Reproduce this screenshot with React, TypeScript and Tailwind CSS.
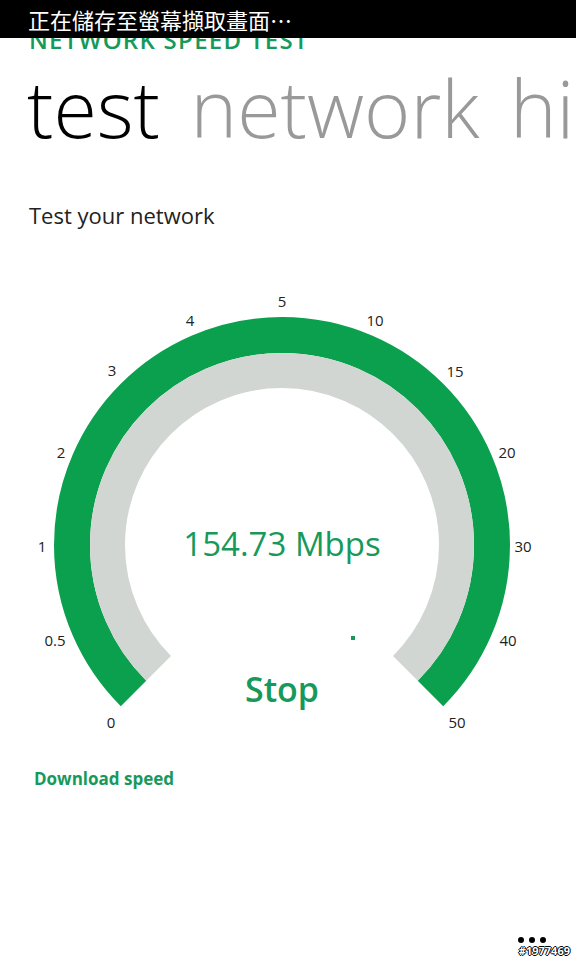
import React from "react";

const GREEN = "#0aa04d";
const TEXTGREEN = "#16995a";

const labels: [string, number, number][] = [
  ["0", 111, 722],
  ["0.5", 55, 640],
  ["1", 42, 546],
  ["2", 61, 452],
  ["3", 112, 370],
  ["4", 190, 320],
  ["5", 282, 301],
  ["10", 375, 320],
  ["15", 455, 371],
  ["20", 507, 452],
  ["30", 523, 546],
  ["40", 508, 640],
  ["50", 457, 722],
];

function arc(cx: number, cy: number, r: number) {
  const s = Math.SQRT1_2;
  const x1 = cx - r * s;
  const y1 = cy + r * s;
  const x2 = cx + r * s;
  const y2 = cy + r * s;
  return `M ${x1} ${y1} A ${r} ${r} 0 1 1 ${x2} ${y2}`;
}

function Gauge() {
  const cx = 282;
  const cy = 545;
  return (
    <svg width={576} height={470} viewBox="0 280 576 470" className="block">
      <path d={arc(cx, cy, 210)} fill="none" stroke={GREEN} strokeWidth={36} />
      <path d={arc(cx, cy, 174.5)} fill="none" stroke="#d2d6d2" strokeWidth={35} />
      <rect x={351} y={636} width={4} height={4} fill={TEXTGREEN} />
      {labels.map(([t, x, y]) => (
        <text
          key={t}
          x={x}
          y={y}
          textAnchor="middle"
          dominantBaseline="central"
          fontSize={15}
          fill="#222"
          fontFamily="'Open Sans', 'Noto Sans', sans-serif"
        >
          {t}
        </text>
      ))}
      <text
        x={282}
        y={556}
        textAnchor="middle"
        fontSize={33}
        fill={TEXTGREEN}
        fontFamily="'Open Sans', 'Noto Sans', sans-serif"
      >
        154.73 Mbps
      </text>
      <text
        x={282}
        y={702}
        textAnchor="middle"
        fontSize={34}
        fontWeight={600}
        fill={TEXTGREEN}
        fontFamily="'Open Sans', 'Noto Sans', sans-serif"
      >
        Stop
      </text>
    </svg>
  );
}

export default function App() {
  return (
    <div className="relative w-[576px] h-[960px] overflow-hidden bg-white font-['Open_Sans','Noto_Sans',sans-serif]">
      <div className="absolute top-0 left-0 right-0 h-[38px] bg-black z-10 flex items-center pl-[28px]">
        <span className="text-white text-[22px] leading-none font-['Noto_Sans_CJK_TC','Noto_Sans_CJK_SC',sans-serif]">
          正在儲存至螢幕擷取畫面…
        </span>
      </div>
      <div className="flex flex-col">
        <div className="mt-[28px] h-[24px] pl-[29px] text-[24px] leading-[24px] font-semibold text-[#16995a] tracking-[1.3px] whitespace-nowrap">
          NETWORK SPEED TEST
        </div>
        <div className="mt-[17px] h-[78px] pl-[27px] text-[79px] leading-[78px] font-light whitespace-nowrap [word-spacing:10px]">
          <span className="text-black">test</span>
          <span className="text-[#999999]"> network hi</span>
        </div>
        <div className="mt-[55px] h-[26px] pl-[29px] text-[22px] leading-[26px] text-[#222]">
          Test your network
        </div>
        <div className="mt-[52px]">
          <Gauge />
        </div>
        <div className="mt-[19px] pl-[34px] text-[17px] leading-[20px] font-bold text-[#16995a]">
          Download speed
        </div>
      </div>
      <div className="absolute right-[30px] bottom-[17px] flex gap-[5px]">
        <span className="w-[6px] h-[6px] rounded-full bg-black" />
        <span className="w-[6px] h-[6px] rounded-full bg-black" />
        <span className="w-[6px] h-[6px] rounded-full bg-black" />
      </div>
      <div className="absolute right-[6px] bottom-[2px] text-[11px] leading-[14px] font-bold text-white [text-shadow:1px_0_0_#000,-1px_0_0_#000,0_1px_0_#000,0_-1px_0_#000]">
        #1977469
      </div>
    </div>
  );
}
